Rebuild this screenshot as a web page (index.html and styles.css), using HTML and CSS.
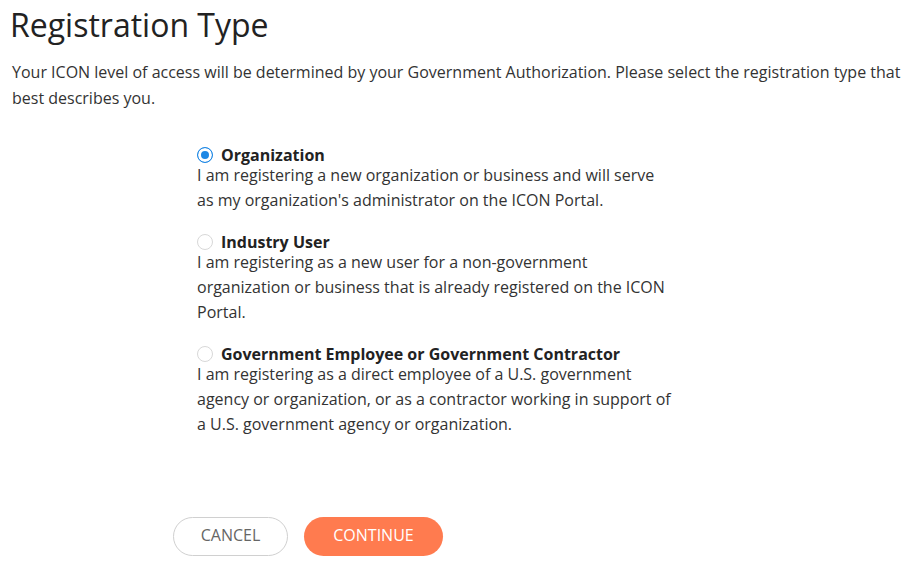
FILE: index.html
```html
<!DOCTYPE html>
<html lang="en">
<head>
    <meta charset="UTF-8">
    <meta name="viewport" content="width=device-width, initial-scale=1.0">
    <title>Registration Type</title>
<link rel="stylesheet" href="styles.css">
</head>
<body>

<div class="page">
    <h1>Registration Type</h1>
    <p class="intro">Your ICON level of access will be determined by your Government Authorization. Please select the registration type that best describes you.</p>

    <form class="reg-form">
        <div class="options">
            <label class="option">
                <span class="option-title"><input type="radio" name="reg_type" value="org" checked> Organization</span>
                <span class="option-desc">I am registering a new organization or business and will serve as my organization's administrator on the ICON Portal.</span>
            </label>
            <label class="option">
                <span class="option-title"><input type="radio" name="reg_type" value="industry"> Industry User</span>
                <span class="option-desc">I am registering as a new user for a non-government organization or business that is already registered on the ICON Portal.</span>
            </label>
            <label class="option">
                <span class="option-title"><input type="radio" name="reg_type" value="gov"> Government Employee or Government Contractor</span>
                <span class="option-desc">I am registering as a direct employee of a U.S. government agency or organization, or as a contractor working in support of a U.S. government agency or organization.</span>
            </label>
        </div>

        <div class="buttons">
            <button type="button" class="btn btn-cancel">CANCEL</button>
            <button type="submit" class="btn btn-continue">CONTINUE</button>
        </div>
    </form>
</div>

</body>
</html>
```

FILE: styles.css
```css
body {
    font-family: "Open Sans", Arial, sans-serif;
    margin: 0;
    background-color: #fff;
    color: #333;
}

.page {
    padding: 0 10px;
}

h1 {
    font-size: 32px;
    font-weight: 400;
    color: #222;
    margin: 0;
    padding-top: 5px;
    line-height: 40px;
}

.intro {
    font-size: 16px;
    line-height: 26px;
    margin: 14px 0 0 2px;
}

.options {
    margin: 36px 0 0 187px;
    width: 476px;
}

.option {
    display: block;
    margin-bottom: 21px;
    cursor: pointer;
}

.option-title {
    display: flex;
    align-items: center;
    gap: 8px;
    font-weight: 700;
    font-size: 16px;
    line-height: 16px;
    color: #222;
}

.option-desc {
    display: block;
    font-size: 16px;
    line-height: 25px;
}

input[type="radio"] {
    appearance: none;
    -webkit-appearance: none;
    width: 16px;
    height: 16px;
    margin: 0;
    border: 1px solid #d8d8d8;
    border-radius: 50%;
    background: #fff;
}

input[type="radio"]:checked {
    border-color: #1e88e5;
    box-shadow: inset 0 0 0 3px #fff;
    background: #1e88e5;
}

.buttons {
    display: flex;
    gap: 16px;
    margin: 80px 0 0 163px;
}

.btn {
    font-family: "Open Sans", Arial, sans-serif;
    font-size: 16px;
    height: 39px;
    padding: 0 0 4px;
    border-radius: 20px;
    cursor: pointer;
}

.btn-cancel {
    width: 115px;
    background: #fff;
    color: #666;
    border: 1px solid #d0d0d0;
}

.btn-continue {
    width: 139px;
    background-color: #ff7b4f;
    color: #fff;
    border: none;
}

.btn-continue:hover {
    background-color: #f56b3d;
}
```
